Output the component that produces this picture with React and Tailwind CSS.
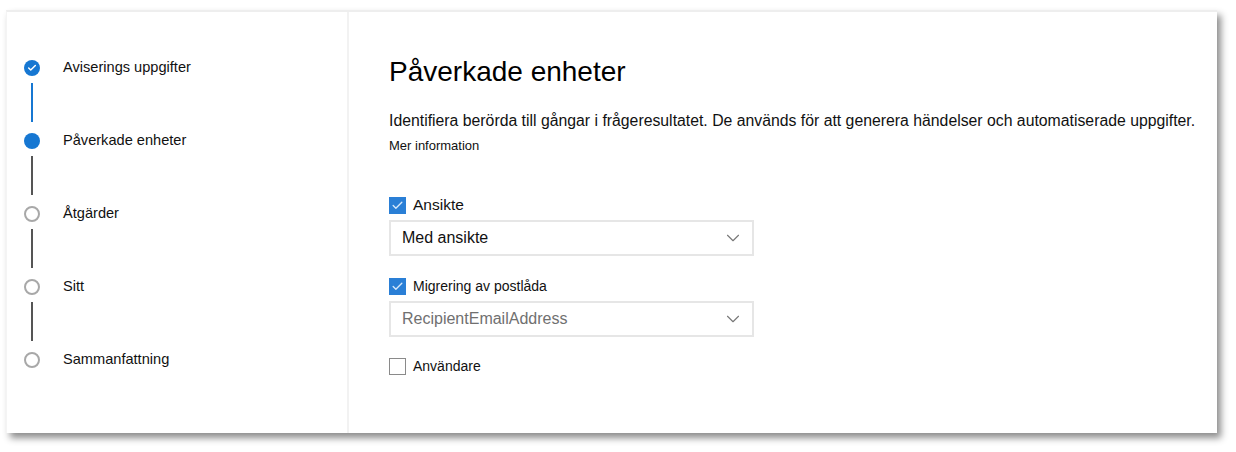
import { Check, ChevronDown } from "lucide-react";

const steps = [
  { label: "Aviserings uppgifter", state: "done" },
  { label: "Påverkade enheter", state: "current" },
  { label: "Åtgärder", state: "todo" },
  { label: "Sitt", state: "todo" },
  { label: "Sammanfattning", state: "todo" },
];

function StepDot({ state }) {
  if (state === "done") {
    return (
      <div className="w-[16px] h-[16px] rounded-full bg-[#1677d2] flex items-center justify-center">
        <Check size={10} strokeWidth={3.5} className="text-white" />
      </div>
    );
  }
  if (state === "current") {
    return <div className="w-[16px] h-[16px] rounded-full bg-[#1677d2]" />;
  }
  return <div className="w-[16px] h-[16px] rounded-full border-2 border-[#a8a8a8] bg-white" />;
}

function Checkbox({ checked, label, big }) {
  return (
    <label className="flex items-center gap-[7px] h-[17px]">
      {checked ? (
        <span className="w-[17px] h-[17px] bg-[#2a7fd6] flex items-center justify-center">
          <Check size={13} strokeWidth={2.5} className="text-[#d6e8fa]" />
        </span>
      ) : (
        <span className="w-[17px] h-[17px] border-[1.5px] border-[#8a8a8a] bg-white" />
      )}
      <span className={`${big ? "text-[15.5px]" : "text-[14px]"} text-[#111] leading-none`}>{label}</span>
    </label>
  );
}

function Dropdown({ value, muted }) {
  return (
    <div className="mt-[6px] w-[365px] h-[36px] border-2 border-[#e6e6e6] flex items-center justify-between pl-[11px] pr-[8px]">
      <span className={`text-[16px] ${muted ? "text-[#707070]" : "text-[#111]"}`}>{value}</span>
      <ChevronDown size={22} strokeWidth={1.2} className="text-[#777]" />
    </div>
  );
}

export default function App() {
  return (
    <div className="w-[1236px] h-[452px] bg-white pt-[10px] pl-[6px] font-['Liberation_Sans',Arial,sans-serif]">
      <div className="w-[1211px] h-[423px] bg-white border-t-2 border-[#eeeeee] border-l border-l-[#f4f4f4] shadow-[4px_5px_7px_rgba(0,0,0,0.45)] flex">

        {/* Stepper */}
        <div className="w-[342px] border-r-2 border-[#f2f2f2] pl-[17px] pt-[48px]">
          {steps.map((step, i) => (
            <div key={i}>
              <div className="flex items-center h-[16px]">
                <StepDot state={step.state} />
                <span className="ml-[23px] text-[14.6px] text-[#111]">{step.label}</span>
              </div>
              {i < steps.length - 1 && (
                <div
                  className={`ml-[7px] w-[2px] h-[39px] mt-[7px] mb-[11px] ${
                    step.state === "done" ? "bg-[#1677d2]" : "bg-[#555]"
                  }`}
                />
              )}
            </div>
          ))}
        </div>

        {/* Content */}
        <div className="flex-1 pl-[40px] pt-[43px]">
          <h1 className="text-[28px] text-black leading-[34px]">Påverkade enheter</h1>
          <p className="mt-[23px] text-[15.8px] text-[#111] leading-[18px]">
            Identifiera berörda till gångar i frågeresultatet. De används för att generera händelser och automatiserade uppgifter.
          </p>
          <p className="mt-[6px] text-[13px] text-[#111]">Mer information</p>

          <div className="mt-[41px]">
            <Checkbox checked big label="Ansikte" />
            <Dropdown value="Med ansikte" />
          </div>
          <div className="mt-[22px]">
            <Checkbox checked label="Migrering av postlåda" />
            <Dropdown value="RecipientEmailAddress" muted />
          </div>
          <div className="mt-[21px]">
            <Checkbox label="Användare" />
          </div>
        </div>
      </div>
    </div>
  );
}
